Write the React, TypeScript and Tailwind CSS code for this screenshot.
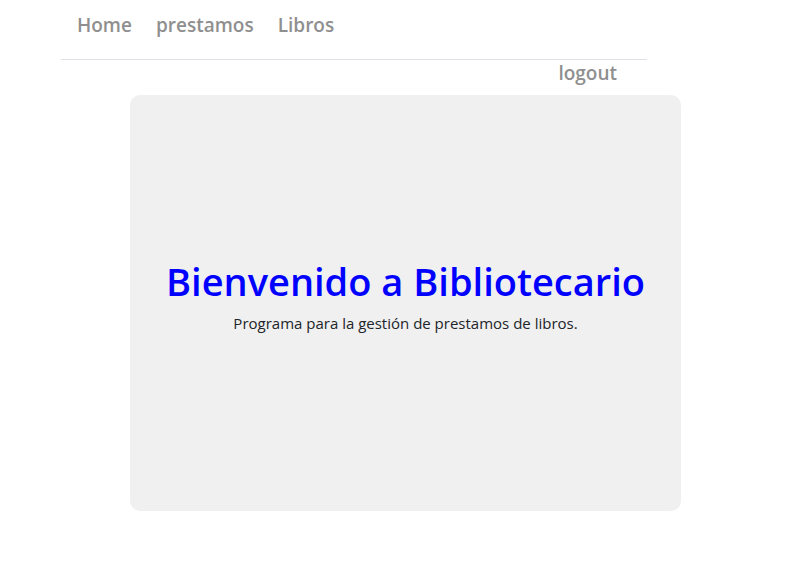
export default function App() {
  const link = "text-[19px] font-semibold text-[#8f8f8f]";
  return (
    <div className="min-h-screen bg-white font-['Open_Sans','Noto_Sans',sans-serif] text-[#212529]">
      <nav className="mr-[164px] ml-[61px] flex h-[60px] items-start gap-6 border-b border-[#dee2e6] px-4 pt-[10px] leading-[30px]">
        <a href="#home" className={link}>Home</a>
        <a href="#prestamos" className={link}>prestamos</a>
        <a href="#libros" className={link}>Libros</a>
      </nav>
      <div className="mr-[194px] flex h-[35px] items-start justify-end leading-[26px]">
        <a href="#logout" className={link}>logout</a>
      </div>
      <main className="mx-auto flex min-h-[416px] w-[68%] flex-col items-center justify-center rounded-[10px] bg-[#f0f0f0] pb-[14px] text-center">
        <h1 className="mb-[6px] text-[38px] leading-[48px] font-semibold text-[#0000ff]">Bienvenido a Bibliotecario</h1>
        <p className="text-[15px] leading-6">Programa para la gestión de prestamos de libros.</p>
      </main>
    </div>
  );
}
